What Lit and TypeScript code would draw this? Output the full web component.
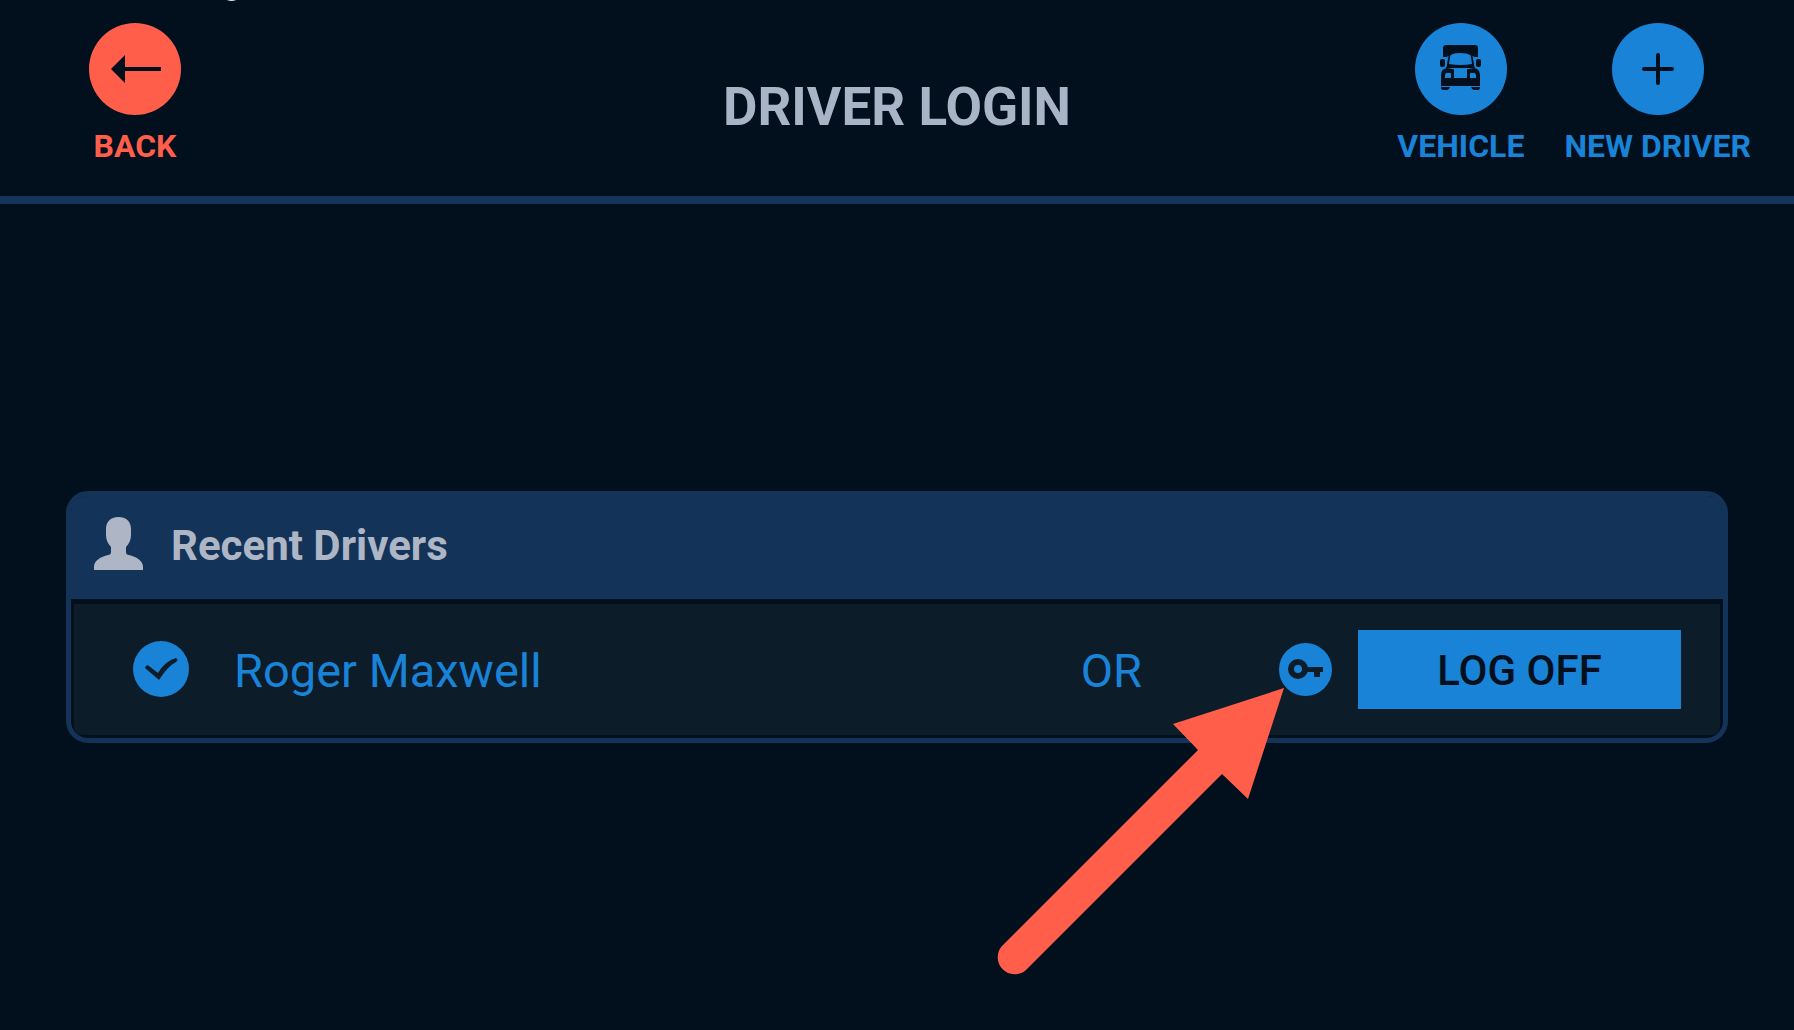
import { LitElement, html, css, svg } from "lit";
import { customElement, property } from "lit/decorators.js";

const icons = {
  back: svg`<path d="M22 46 36 32v12h36v4H36v12z" fill="currentColor"/>`,
  plus: svg`<path d="M46 32v28M32 46h28" stroke="currentColor" stroke-width="4" stroke-linecap="round"/>`,
  truck: svg`
    <path fill="currentColor" d="M31 22h29q3 0 3 3v9H28v-9q0-3 3-3z"/>
    <path fill="currentColor" d="M33 30h25l2 15H31z"/>
    <path fill="none" stroke="#1883d7" stroke-width="1" d="M33 33 31 44M58 33l2 11"/>
    <path fill="#1883d7" d="M36 32q2-2 9-2t10 2q1 0 1 2l1 7q-11 2-23 0l1-7q0-2 1-2z"/>
    <path fill="currentColor" d="M32 45q13 3 27 0 6 1 6 7v11H26V52q0-6 6-7z"/>
    <path fill="#1883d7" d="M39 46h13v9H39zM31 50h5v5h-6v-3zM55 50h5l1 2v3h-6z"/>
    <rect x="25" y="36" width="5" height="8" rx="2" fill="currentColor"/>
    <rect x="61" y="36" width="5" height="8" rx="2" fill="currentColor"/>
    <path fill="currentColor" d="M26 64h9q-1 3-3 3h-4q-2 0-2-3zM56 64h9q0 3-2 3h-4q-2 0-3-3z"/>`,
};

@customElement("round-action")
export class RoundAction extends LitElement {
  @property() label = "";
  @property() icon: keyof typeof icons = "back";

  static styles = css`
    :host { display: block; }
    .action {
      display: flex;
      flex-direction: column;
      align-items: center;
      gap: 12px;
      padding: 0;
      border: 0;
      background: none;
      color: inherit;
      font: 700 32px/38px Roboto, sans-serif;
      white-space: nowrap;
      cursor: pointer;
    }
    .disc {
      width: 92px;
      height: 92px;
      border-radius: 50%;
      background: currentColor;
    }
    .glyph { display: block; color: #020f1d; fill: none; }
  `;

  render() {
    return html`
      <button class="action" type="button">
        <span class="disc">
          <svg class="glyph" viewBox="0 0 92 92" width="92" height="92" aria-hidden="true">${icons[this.icon]}</svg>
        </span>
        <span>${this.label}</span>
      </button>`;
  }
}

@customElement("app-root")
export class AppRoot extends LitElement {
  static styles = css`
    :host {
      display: flex;
      flex-direction: column;
      min-height: 100vh;
      box-sizing: border-box;
      position: relative;
      background: #020f1d;
      color: #1883d7;
      font-family: Roboto, sans-serif;
      overflow: hidden;
    }
    .speck {
      position: absolute;
      left: 226px;
      top: -4px;
      width: 11px;
      height: 5px;
      border-radius: 50%;
      background: #dfe6ee;
    }
    .bar {
      display: grid;
      grid-template-columns: 1fr auto 1fr;
      align-items: start;
      padding: 23px 43px 31px;
      border-bottom: 8px solid #14345a;
    }
    .back { justify-self: start; padding-left: 46px; color: #ff5e4b; }
    .title {
      margin: 0;
      padding-top: 53px;
      color: #a9b5c7;
      font: 700 53px/62px Roboto, sans-serif;
    }
    .actions { display: flex; justify-self: end; gap: 40px; }
    .main {
      flex: 1;
      display: flex;
      flex-direction: column;
      justify-content: center;
      padding: 0 66px;
    }
    .card {
      border: 5px solid #133458;
      border-radius: 22px;
      background: #020f1d;
    }
    .head {
      display: flex;
      align-items: center;
      gap: 28px;
      height: 103px;
      box-sizing: border-box;
      padding: 0 23px 8px;
      border-radius: 16px 16px 0 0;
      background: #133458;
      color: #aeb6c6;
    }
    .heading { margin: 0; padding-top: 4px; font: 700 42px/50px Roboto, sans-serif; }
    .list { margin: 0; padding: 5px 3px 3px; list-style: none; }
    .row {
      display: flex;
      align-items: center;
      height: 131px;
      box-sizing: border-box;
      padding: 0 39px 1px 59px;
      border-radius: 0 0 8px 8px;
      background: #0d1c29;
      font-size: 47px;
      line-height: 56px;
    }
    .name { flex: 1; padding: 4px 0 0 45px; }
    .or { padding: 4px 137px 0 0; }
    .keybox { position: relative; display: flex; margin-right: 26px; }
    .key {
      padding: 0;
      border: 0;
      border-radius: 50%;
      background: #1883d7;
      color: #0d1c29;
      cursor: pointer;
    }
    .icon { display: block; }
    .pointer {
      position: absolute;
      right: 47px;
      top: 45px;
      z-index: 1;
      pointer-events: none;
    }
    .logoff {
      width: 323px;
      height: 79px;
      padding: 4px 0 0;
      border: 0;
      background: #1883d7;
      color: #020f1d;
      font: 500 42px/50px Roboto, sans-serif;
      cursor: pointer;
    }
  `;

  render() {
    return html`
      <span class="speck" aria-hidden="true"></span>
      <header class="bar">
        <round-action class="back" icon="back" label="BACK"></round-action>
        <h1 class="title">DRIVER LOGIN</h1>
        <nav class="actions" aria-label="Actions">
          <round-action icon="truck" label="VEHICLE"></round-action>
          <round-action icon="plus" label="NEW DRIVER"></round-action>
        </nav>
      </header>
      <main class="main">
        <section class="card">
          <header class="head">
            <svg class="icon" width="49" height="53" viewBox="0 0 49 53" aria-hidden="true">
              <path fill="currentColor" d="M24.500 0C33 0 37 5 37 12v6c0 5-2 9-5 12v5c0 2 1 3 3 3 7 2 14 5 14 12v3H0v-3c0-7 7-10 14-12 2 0 3-1 3-3v-5c-3-3-5-7-5-12v-6C12 5 16 0 24.500 0z"/>
            </svg>
            <h2 class="heading">Recent Drivers</h2>
          </header>
          <ul class="list">
            <li class="row">
              <svg class="icon" width="56" height="56" viewBox="0 0 56 56" aria-hidden="true">
                <circle cx="28" cy="28" r="28" fill="#1883d7"/>
                <path d="M12 27q1-4 4-2l9 7Q32 20 43 17q3 2 0 4Q35 25 26 39z" fill="#0d1c29"/>
              </svg>
              <span class="name">Roger Maxwell</span>
              <span class="or">OR</span>
              <span class="keybox">
                <button class="key" type="button" aria-label="Driver key">
                  <svg class="icon" width="53" height="53" viewBox="0 0 53 53" aria-hidden="true">
                    <circle cx="19" cy="26" r="7" fill="none" stroke="currentColor" stroke-width="6"/>
                    <path d="M27 24h17v5h-3v5h-6v-5h-8z" fill="currentColor"/>
                  </svg>
                </button>
                <svg class="pointer" width="288" height="288" viewBox="0 0 288 288" aria-hidden="true">
                  <path fill="#ff5e4b" d="M287 0 176 36 201 62 5 258A17 17 0 0 0 29 282L225 86 251 111z"/>
                </svg>
              </span>
              <button class="logoff" type="button">LOG OFF</button>
            </li>
          </ul>
        </section>
      </main>`;
  }
}
